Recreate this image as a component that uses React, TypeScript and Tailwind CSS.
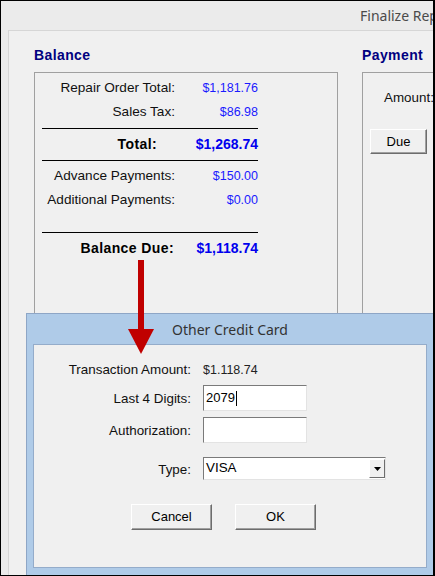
import { ReactNode } from 'react'

const sans = { fontFamily: '"Liberation Sans", Arial, sans-serif' }

function Row({ label, value, bold, labelPad }: { label: string; value: string; bold?: boolean; labelPad?: string }) {
  return (
    <div className="flex h-[24px] items-center">
      <div
        className={`w-[133px] whitespace-nowrap text-right ${labelPad || ''} ${
          bold ? 'text-[14px] font-bold tracking-[0.4px] text-black' : 'text-[13.6px] text-[#111]'
        }`}
      >
        {label}
      </div>
      <div className={`w-[83px] text-right ${bold ? 'text-[14px] font-bold text-[#0000ee]' : 'text-[12.5px] text-[#1a1aff]'}`}>
        {value}
      </div>
    </div>
  )
}

function WinButton({ children, className }: { children: ReactNode; className?: string }) {
  return (
    <button
      className={`flex items-center justify-center border border-t-white border-l-white border-r-[#6d6d6d] border-b-[#6d6d6d] bg-[#f0f0f0] text-[13px] text-black shadow-[inset_-1px_-1px_0_#a0a0a0] ${className || ''}`}
    >
      {children}
    </button>
  )
}

function FieldRow({ label, children, className }: { label: string; children: ReactNode; className?: string }) {
  return (
    <div className={`flex items-center ${className || ''}`}>
      <div className="w-[157px] whitespace-nowrap pt-[3px] text-right text-[13.4px] text-[#111]">{label}</div>
      <div className="ml-[12px]">{children}</div>
    </div>
  )
}

export default function App() {
  return (
    <div
      className="relative h-[576px] w-[435px] overflow-hidden border border-r-2 border-black bg-[#ebebeb]"
      style={sans}
    >
      {/* window title */}
      <div
        className="flex h-[29px] items-center overflow-hidden whitespace-nowrap pl-[359px] text-[14px] text-[#4a4a4a]"
        style={{ fontFamily: '"Noto Sans", "Open Sans", sans-serif' }}
      >
        Finalize Repair Order
      </div>

      {/* main panel */}
      <div className="ml-[7px] h-[560px] border-l border-t border-[#d6d6d6] bg-[#f0f0f0] pl-[25px]">
        <div className="flex gap-[24px]">
          {/* Balance */}
          <div>
            <div className="flex h-[41px] items-end pb-[6px] text-[14px] font-bold tracking-[0.4px] text-[#000080]">Balance</div>
            <div className="h-[400px] w-[304px] border border-[#a0a0a0] pl-[7px] pt-[3px]">
              <Row label="Repair Order Total:" value="$1,181.76" />
              <Row label="Sales Tax:" value="$86.98" />
              <div className="mt-[4px] h-px w-[216px] bg-black" />
              <div className="mt-[3px]">
                <Row label="Total:" value="$1,268.74" bold labelPad="pr-[18px]" />
              </div>
              <div className="mt-[4px] h-px w-[216px] bg-black" />
              <div className="mt-[3px]">
                <Row label="Advance Payments:" value="$150.00" />
                <Row label="Additional Payments:" value="$0.00" />
              </div>
              <div className="mt-[20px] h-px w-[216px] bg-black" />
              <div className="mt-[3px]">
                <Row label="Balance Due:" value="$1,118.74" bold labelPad="pr-[1px]" />
              </div>
            </div>
          </div>

          {/* Payment */}
          <div>
            <div className="flex h-[41px] items-end pb-[6px] text-[14px] font-bold tracking-[0.4px] text-[#000080]">Payment</div>
            <div className="h-[400px] w-[200px] border border-[#a0a0a0] pl-[21px] pt-[15px]">
              <div className="text-[13.4px] text-[#111]">Amount:</div>
              <WinButton className="ml-[-14px] mt-[21px] h-[25px] w-[57px]">Due</WinButton>
            </div>
          </div>
        </div>
      </div>

      {/* dialog */}
      <div className="absolute left-[25px] top-[312px] h-[263px] w-[408px] border border-[#8ea6c6] bg-[#afcbe8] pb-[7px] pl-[6px] pr-[6px]">
        <div
          className="flex h-[30px] items-center justify-center text-[14px] text-[#333]"
          style={{ fontFamily: '"Noto Sans", "Open Sans", sans-serif' }}
        >
          Other Credit Card
        </div>
        <div className="h-[224px] border border-[#94acca] bg-[#f0f0f0] pt-[14px]">
          <FieldRow label="Transaction Amount:" className="h-[20px]">
            <div className="pt-[3px] text-[12.5px] text-[#222]">$1.118.74</div>
          </FieldRow>
          <FieldRow label="Last 4 Digits:" className="mt-[6px]">
            <div className="flex h-[26px] w-[104px] items-center border border-t-[#7a7a7a] border-l-[#7a7a7a] border-r-[#e3e3e3] border-b-[#e3e3e3] bg-white pl-[2px] text-[13px] text-black">
              2079<span className="ml-px h-[15px] w-px bg-black" />
            </div>
          </FieldRow>
          <FieldRow label="Authorization:" className="mt-[6px]">
            <div className="h-[26px] w-[104px] border border-t-[#7a7a7a] border-l-[#7a7a7a] border-r-[#e3e3e3] border-b-[#e3e3e3] bg-white" />
          </FieldRow>
          <FieldRow label="Type:" className="mt-[14px]">
            <div className="flex h-[23px] w-[183px] items-center border border-t-[#7a7a7a] border-l-[#7a7a7a] border-r-[#e3e3e3] border-b-[#e3e3e3] bg-white">
              <div className="flex-1 pl-[2px] text-[13.4px] text-black">VISA</div>
              <div className="flex h-[19px] w-[16px] items-center justify-center border border-t-white border-l-white border-r-[#6d6d6d] border-b-[#6d6d6d] bg-[#f0f0f0]">
                <svg width="7" height="4" viewBox="0 0 7 4">
                  <polygon points="0,0 7,0 3.5,4" fill="#000" />
                </svg>
              </div>
            </div>
          </FieldRow>
          <div className="mt-[24px] flex pl-[97px]">
            <WinButton className="h-[26px] w-[81px]">Cancel</WinButton>
            <WinButton className="ml-[23px] h-[26px] w-[81px]">OK</WinButton>
          </div>
        </div>
      </div>

      {/* pointer arrow, drawn over the dialog */}
      <svg className="absolute left-[126px] top-[259px] z-10" width="28" height="96" viewBox="0 0 28 96">
        <rect x="11" y="0" width="6" height="72" fill="#c00000" />
        <polygon points="1,69 27,69 14,94" fill="#c00000" />
      </svg>
    </div>
  )
}
